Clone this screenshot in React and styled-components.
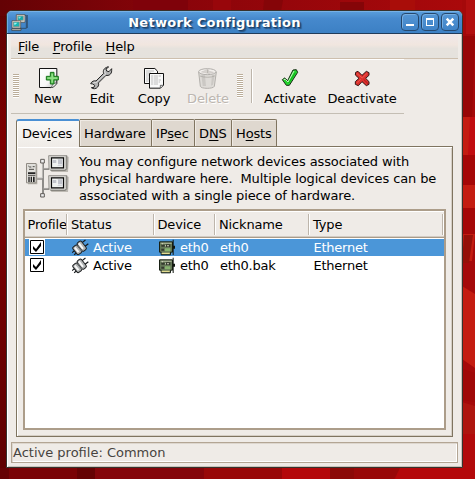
import React from "react";
import styled, { createGlobalStyle, css } from "styled-components";

const GlobalStyle = createGlobalStyle`
  html, body { margin: 0; padding: 0; overflow: hidden; }
  * { box-sizing: border-box; }
`;

const Desktop = styled.div`
  position: relative;
  width: 475px;
  height: 479px;
  padding: 10px 12px 11px 6px;
  overflow: hidden;
  font: 13px/17px "DejaVu Sans", sans-serif;
  letter-spacing: -0.15px;
  color: #000;
  background: linear-gradient(90deg, #5e0000, #880408 45%, #b40a0a);
`;
const WallpaperArt = styled.svg`
  position: absolute;
  inset: 0;
`;
const Window = styled.main`
  position: relative;
  display: flex;
  flex-direction: column;
  width: 457px;
  height: 458px;
  border: 1px solid #37332d;
  border-radius: 6px 6px 0 0;
  background: #efebe7;
  box-shadow: inset 1px 0 #fff, inset -1px -1px #c9c2ba;
  overflow: hidden;
`;
const TitleBar = styled.header`
  display: flex;
  align-items: center;
  flex: none;
  height: 23px;
  padding: 0 3px 0 4px;
  background: linear-gradient(#5b9fdc, #4689cd 35%, #3c80c4);
  border-bottom: 1px solid #203b5a;
  box-shadow: inset 0 1px #76b1e6, inset 1px 0 #6fabe1;
`;
const Title = styled.h1`
  flex: 1;
  margin: 0;
  text-align: center;
  font-size: 13px;
  font-weight: bold;
  letter-spacing: 0.27px;
  color: #fff;
  text-shadow: 1px 1px 1px #1b3f66, 2px 2px 1px #2a5788;
`;
const WindowButtons = styled.div`
  display: flex;
  gap: 2px;
`;
const WindowButton = styled.button`
  width: 18px;
  height: 18px;
  padding: 0;
  border: 1px solid #25486e;
  border-radius: 4px;
  background: linear-gradient(#5596d5, #3f83c7);
  box-shadow: inset 1px 1px #76aee1;
  display: grid;
  place-items: center;
`;
const MenuBar = styled.nav`
  display: flex;
  flex: none;
  gap: 13.5px;
  height: 25px;
  margin: 0 4px;
  padding: 4px 7px 0;
  border-bottom: 1px solid #cdbfae;
  background: linear-gradient(#efe8ea, #f1e6df 45%, #e6e2dd 60%, #e5e2dd);
`;
const MenuItem = styled.span`
  white-space: pre;
`;
const Mnemonic = styled.u`
  text-decoration-thickness: 1px;
  text-underline-offset: 2px;
`;
const Toolbar = styled.div`
  display: flex;
  flex: none;
  width: 393px;
  height: 55px;
  margin-left: 4px;
  padding-left: 2px;
  border-top: 1px solid #fff;
  border-bottom: 1px solid #c4beb4;
`;
const Grip = styled.div`
  width: 6px;
  height: 24px;
  margin: 14px ${(p) => p.$after}px 0 0;
  background: repeating-linear-gradient(#bbad9a 0 1px, #fff 1px 2px);
`;
const Separator = styled.div`
  width: 2px;
  height: 34px;
  margin: 9px 1px 0 0;
  background: #fff;
  border-left: 1px solid #bdb5ab;
`;
const ToolButton = styled.div`
  display: flex;
  flex-direction: column;
  align-items: center;
  width: ${(p) => p.$width}px;
  padding-top: 6px;
  white-space: nowrap;
  color: ${(p) => (p.$disabled ? "#bcb6b0" : "#000")};
  text-shadow: ${(p) => (p.$disabled ? "1px 1px #fff" : "none")};
`;
const TabStrip = styled.div`
  position: relative;
  z-index: 1;
  display: flex;
  flex: none;
  height: 28px;
  margin: 5px 0 -1px 9px;
`;
const Tab = styled.div`
  width: ${(p) => p.$width}px;
  height: 27px;
  padding: 5px 0 0 4px;
  white-space: nowrap;
  border: 1px solid #7f7460;
  border-left-width: 0;
  border-bottom: 0;
  border-radius: 0 2px 0 0;
  background: #dfd8cf;
  box-shadow: inset 1px 1px #efeae4;
  ${(p) =>
    p.$active &&
    css`
      height: 28px;
      padding: 4px 0 0 5px;
      border-left-width: 1px;
      border-top: 2px solid #4a90d4;
      border-radius: 3px 2px 0 0;
      background: linear-gradient(#f9f8f6, #efebe7);
      box-shadow: inset 1px 0 #fff;
    `}
`;
const Panel = styled.section`
  flex: none;
  display: flex;
  flex-direction: column;
  width: 437px;
  height: 291px;
  margin-left: 9px;
  padding: 6px;
  border: 1px solid #7f7460;
  box-shadow: inset 1px 1px #fff, inset -1px -1px #d5cec5;
`;
const Intro = styled.div`
  display: flex;
  height: 56px;
  padding-left: 2px;
`;
const IntroText = styled.p`
  margin: 0 0 0 9px;
  white-space: pre;
  letter-spacing: -0.12px;
`;
const Table = styled.div`
  width: 423px;
  height: 221px;
  border: 2px solid #ac9d8a;
  background: #fff;
`;
const columns = css`
  display: grid;
  grid-template-columns: 42px 87px 61px 94px 134px 1fr;
`;
const HeaderRow = styled.div`
  ${columns}
  height: 28px;
  padding: 3px 0 0;
  background: #efebe7;
  border-bottom: 1px solid #fff;
  box-shadow: inset 0 1px #fff, inset 0 -1px #a99b89, inset 0 -2px #d3ccc4;
`;
const HeaderCell = styled.div`
  height: 21px;
  padding: 2px 0 0 ${(p) => p.$pad}px;
  border-right: 1px solid #bdb5ab;
  box-shadow: 1px 0 #fff;
  overflow: hidden;
  white-space: nowrap;
`;
const DataRow = styled.div`
  ${columns}
  height: ${(p) => (p.$selected ? 17 : 19)}px;
  padding-top: ${(p) => (p.$selected ? 0 : 1)}px;
  color: ${(p) => (p.$selected ? "#fff" : "#000")};
  background: ${(p) => (p.$selected ? "#4b96d8" : "#fff")};
`;
const Cell = styled.div`
  display: flex;
  gap: 4px;
  height: 18px;
  padding-left: ${(p) => p.$pad}px;
  white-space: nowrap;
  letter-spacing: -0.25px;
`;
const StatusBar = styled.footer`
  height: 21px;
  margin: 5px 4px 0;
  padding: 1px 0 0 1px;
  border: 1px solid #b3a594;
  box-shadow: inset 1px 1px #ddd6ce, inset -1px -1px #fff;
  color: #474340;
  letter-spacing: 0;
`;

const Wallpaper = () => (
  <WallpaperArt width="475" height="479">
    <defs>
      <linearGradient id="leftFade" x2="0" y2="1">
        <stop offset="0" stopColor="#5c0202" />
        <stop offset="0.3" stopColor="#7e0000" />
        <stop offset="0.6" stopColor="#720000" />
        <stop offset="1" stopColor="#5e0000" />
      </linearGradient>
      <linearGradient id="topFade">
        <stop offset="0" stopColor="#640204" />
        <stop offset="0.35" stopColor="#88040a" />
        <stop offset="1" stopColor="#ab090b" />
      </linearGradient>
    </defs>
    <path fill="url(#leftFade)" d="M0 0h8v479H0z" />
    <path fill="url(#topFade)" d="M0 0h475v16H0z" />
    <path fill="#7f020a" d="M133 0h55v11h-55z" />
    <path fill="#98060b" d="M213 0h18v11h-18z" />
    <path fill="#850508" d="M264 0h19l-2 11h-18zM340 2h24v9h-24z" />
    <path fill="#a90d09" d="M390 0h25v11h-25z" />
    <path fill="#a5090a" d="M462 0h13v479h-13z" />
    <path fill="#b20f0f" d="M466 0h9v34h-9z" />
    <path fill="#980606" d="M463 36h12l-3 82h-9z" />
    <path fill="#c41c11" d="M462 117h10l-3 38h-7zM462 185h13v23h-13zM462 234h13l-3 27h-10zM462 286l13 8v74l-13-9z" />
    <path fill="#c10c10" d="M470 117h5v38h-7z" />
    <path fill="#a50707" d="M462 155h13v30h-13zM462 208h13v26h-13z" />
    <path fill="#951008" d="M464 235h9l-4 28h-7z" />
    <path fill="#a00808" d="M462 369l13 4v29l-13-2z" />
    <path fill="#ae150f" d="M462 402l13 4v28h-13z" />
    <path fill="#b20a0b" d="M462 434h13v45h-13z" />
    <path fill="#7a0305" d="M0 468h90v11H0z" />
    <path fill="#650203" d="M77 468h18v11H77zM0 468h9v11H0z" />
    <path fill="#84050a" d="M95 468h109v11H95z" />
    <path fill="#980808" d="M204 468h78v11h-78zM350 468h50l-6 11h-46z" />
    <path fill="#b4080a" d="M282 468h48v11h-48zM400 468h75v11h-80z" />
    <path fill="#8b0907" d="M330 468h24v11h-24z" />
  </WallpaperArt>
);

const WindowIcon = () => (
  <svg width="17" height="17" viewBox="34 40 51 51">
    <path d="M52 44h28v39H61M83 43v39" stroke="#273848" strokeWidth="2" fill="none" />
    <path d="M50 42h26v23H50z" fill="#d9d5cd" stroke="#4c4a45" strokeWidth="2" />
    <path d="M54 46h17v13H54z" fill="#14a9a8" stroke="#a09d94" strokeWidth="2" />
    <path d="M37 60h26v22H37z" fill="#e1ded7" stroke="#4c4a45" strokeWidth="2" />
    <path d="M41 64h18v14H41z" fill="#14b7b4" stroke="#8a8880" strokeWidth="2" />
    <path d="M43 66h10l-8 8z" fill="#a5f4ef" />
    <path d="M56 48h9l-7 7z" fill="#85e5e2" />
    <path d="M36 84h28v5H36z" fill="#c9c6bd" stroke="#36342f" strokeWidth="2" />
  </svg>
);
const MinimizeIcon = () => (
  <svg width="14" height="14"><path d="M3 9h8v2H3z" fill="#fff" /></svg>
);
const MaximizeIcon = () => (
  <svg width="14" height="14"><path d="M3 3h8v8H3zM4 5v5h6V5z" fill="#fff" fillRule="evenodd" /></svg>
);
const CloseIcon = () => (
  <svg width="14" height="14"><path d="M3.700 3.700l6.600 6.600M10.300 3.700l-6.600 6.600" stroke="#fff" strokeWidth="2.500" /></svg>
);

const NewIcon = () => (
  <svg width="24" height="24" viewBox="108 198 72 72">
    <defs>
      <linearGradient id="paper" x2="1" y2="1"><stop stopColor="#fff" /><stop offset=".6" stopColor="#f7f7f7" /><stop offset="1" stopColor="#b8b8b8" /></linearGradient>
    </defs>
    <path d="M118.500 205.500h52v45l-12 12h-40z" fill="url(#paper)" stroke="#141414" strokeWidth="3" />
    <path d="M170 246c-2 11-8 16-18 17 5-4 6-8 5-13 5 1 9 0 13-4z" fill="#e6e6e6" stroke="#444" strokeWidth="2" />
    <path d="M151 217h11v12h13v11h-13v12h-11v-12h-12v-11h12z" fill="#55bd50" stroke="#16731a" strokeWidth="3" strokeLinejoin="round" />
    <path d="M154 221h5v11h13v5h-13v11h-5v-11h-12v-5h12z" fill="#8fdf86" />
  </svg>
);
const EditIcon = () => (
  <svg width="24" height="24" viewBox="270 198 72 72">
    <path d="M320 202c-8 3-12 10-9 18l-23 23c-6-2-13 1-16 8l6 1 6 4-2 6-8 1c5 5 15 4 19-2 3-4 4-9 2-12l23-23c8 2 17-3 17-14v-6l-8 9-7-2-2-6 8-6c-2-1-4-1-6 1z" fill="#b2b2b2" stroke="#252525" strokeWidth="3" strokeLinejoin="round" />
    <path d="M315 210c-2 6 0 9 2 12l-27 26c-4-1-7-1-10 1" fill="none" stroke="#e3e3e3" strokeWidth="3" />
    <path d="M313 228l-22 22" stroke="#8c8c8c" strokeWidth="2" />
  </svg>
);
const CopyIcon = () => (
  <svg width="24" height="24" viewBox="426 198 72 72">
    <path d="M433.500 205.500h31l8 8v37h-39z" fill="#fafafa" stroke="#111" strokeWidth="3" />
    <path d="M438 213h24M438 219h15M438 225h10M438 231h8M438 237h9M438 243h8" stroke="#a0a0a0" strokeWidth="2" />
    <path d="M448.500 220.500h42v35l-9 9h-33z" fill="#fafafa" stroke="#111" strokeWidth="3" />
    <path d="M481 264v-8h9" fill="#ddd" stroke="#333" strokeWidth="2" />
    <path d="M453 228h30M453 234h23M453 240h31M453 246h27M453 252h22" stroke="#a0a0a0" strokeWidth="2" strokeDasharray="7 2 12 2" />
  </svg>
);
const DeleteIcon = () => (
  <svg width="24" height="24" viewBox="588 198 72 72">
    <path d="M596 216l5 43c2 8 39 8 42 0l6-43z" fill="#dedbd7" stroke="#b2afab" strokeWidth="3" />
    <path d="M604 224l4 34h10l-3-32zM636 225l-3 32 6-3 5-29z" fill="#cbc8c4" />
    <ellipse cx="622" cy="215" rx="26" ry="9" fill="#f2efec" stroke="#b2afab" strokeWidth="3" />
    <path d="M604 216l14-6 5-3 3 6 15 4-14 4z" fill="#d7d3cf" stroke="#bbb7b2" />
    <path d="M623 209v10M600 228c12 5 33 5 44 0" stroke="#a5a19c" strokeWidth="2" fill="none" />
  </svg>
);
const ActivateIcon = () => (
  <svg width="24" height="24" viewBox="834 198 72 72">
    <path d="M847 239l7-5 9 8 16-32 10-1 4 8-25 39h-9z" fill="#25d32e" stroke="#142b12" strokeWidth="3" strokeLinejoin="round" />
    <path d="M851 239l5-1 8 8 18-33" stroke="#c3f5bd" strokeWidth="3" fill="none" />
    <path d="M866 249l20-31" stroke="#0cb31a" strokeWidth="3" />
  </svg>
);
const DeactivateIcon = () => (
  <svg width="24" height="24" viewBox="1050 198 72 72">
    <path d="M1067 217l7-3 12 12 13-12 8 4v8l-10 9 10 10v8l-8 4-13-12-11 12-9-4v-8l11-10-11-10z" fill="#dc302d" stroke="#331818" strokeWidth="3" strokeLinejoin="round" />
    <path d="M1070 220l17 14 14-14M1070 249l12-11" stroke="#ee5a52" strokeWidth="3" fill="none" />
    <path d="M1091 238l13 13" stroke="#b5161a" strokeWidth="3" />
  </svg>
);

const Monitor = ({ y }) => (
  <g transform={`translate(0 ${y})`}>
    <path d="M149 34h57v14l-2 32h-50z" fill="#bdb9b2" />
    <path d="M146 31h55v40l-3 4h-46l-5-6z" fill="#d8d7d3" stroke="#96948f" strokeWidth="3" />
    <path d="M199 32v38l-4 5h-43" stroke="#85827c" strokeWidth="3" fill="none" />
    <path d="M154.500 37.500h36v30h-36z" fill="#eef0ef" stroke="#090909" strokeWidth="3.500" />
    <path d="M158 44h11v9h-11zM173 42h14v19h-14z" fill="#c1c3cb" />
    <path d="M170 44h2v14h14" stroke="#fff" strokeWidth="2" fill="none" />
  </g>
);
const NetworkDiagramIcon = () => (
  <svg width="45" height="48" viewBox="75 132 135 144">
    <path d="M110 209h16M129 156v107M129 180h18M129 240h18" fill="none" stroke="#8d8b88" strokeWidth="6" />
    <path d="M110 207h17v-48M131 177h14M131 237h14" fill="none" stroke="#deddd9" strokeWidth="2" />
    <path d="M122 151h11v11h-11zM122 254h11v10h-11z" fill="#eee" stroke="#615d59" strokeWidth="3" />
    <path d="M84 166h28v60H84z" fill="#b4b0a9" />
    <path d="M79.500 163.500h29v58h-29z" fill="#e0dfdb" stroke="#908b84" strokeWidth="3" />
    <path d="M85 171l4 3h5M98 173h6M87 181h15M84 199h22" stroke="#4d4b48" strokeWidth="3" fill="none" />
    <path d="M84 190h22v5H84zM85 203h4v16h-4zM92 203h4v16h-4zM99 203h5v16h-5z" fill="#222" />
    <Monitor y={109} />
    <Monitor y={169} />
  </svg>
);
const PlugIcon = () => (
  <svg width="17" height="18" viewBox="214 386 51 54">
    <g transform="translate(238 412) rotate(-38)">
      <path d="M-28-3h10v9h-9M12-8h15M12 6h15" stroke="#15181a" strokeWidth="3.500" fill="none" />
      <rect x="-19" y="-14" width="17" height="28" rx="5" fill="#b0b3b3" stroke="#1b1d1f" strokeWidth="3" />
      <rect x="-1" y="-16" width="16" height="31" rx="5" fill="#b0b3b3" stroke="#1b1d1f" strokeWidth="3" />
      <path d="M-12-10v18M5-12v20" stroke="#f8f8f8" strokeWidth="6" />
      <path d="M-2-10v22" stroke="#777b7d" strokeWidth="3" />
    </g>
  </svg>
);
const CardIcon = () => (
  <svg width="17" height="17" viewBox="477 718 51 51">
    <path d="M478.500 726.500h39v31h-6v8h-28v-8h-5z" fill="#647757" stroke="#182014" strokeWidth="3" />
    <path d="M518 720h3v46h-3zM521 738h4v9h-4z" fill="#101510" />
    <path d="M482 729h33v3h-33z" fill="#b6bea0" />
    <path d="M484 735h10v6h-10zM498 734h13v8h-13zM484 747h8v6h-8z" fill="#343a2e" />
    <path d="M486 731h3v3h-3zM495 737h3v3h-3zM501 737h6v3h-6z" fill="#d7d8c2" />
    <path d="M495 746h16v9h-16z" fill="#87b36e" />
    <path d="M485 759h24v4h-24z" fill="#e3dc90" />
  </svg>
);
const CheckBox = () => (
  <svg width="16" height="16">
    <path d="M0 0h16v16H0z" fill="#fff" />
    <path d="M1.500 1.500h13v13h-13z" fill="#fff" stroke="#000" />
    <path d="M4 7l3 3 5-7v4l-5 6-3-3z" fill="#000" />
  </svg>
);

const tools = [
  { label: "New", width: 54, Icon: NewIcon },
  { label: "Edit", width: 54, Icon: EditIcon },
  { label: "Copy", width: 50, Icon: CopyIcon },
  { label: "Delete", width: 58, Icon: DeleteIcon, disabled: true },
];
const actions = [
  { label: "Activate", width: 72, Icon: ActivateIcon },
  { label: "Deactivate", width: 72, Icon: DeactivateIcon },
];
const tabs = [
  { text: ["Dev", "i", "ces"], width: 64, active: true },
  { text: ["Hard", "w", "are"], width: 72 },
  { text: ["IP", "s", "ec"], width: 43 },
  { text: ["D", "N", "S"], width: 37 },
  { text: ["H", "o", "sts"], width: 45 },
];
const headers = [
  ["Profile", 2.5],
  ["Status", 4],
  ["Device", 3.5],
  ["Nickname", 4],
  ["Type", 4],
];
const devices = [
  { nickname: "eth0", selected: true },
  { nickname: "eth0.bak", selected: false },
];

const Labelled = ({ text: [before, key, after] }) => (
  <>
    {before}
    <Mnemonic>{key}</Mnemonic>
    {after}
  </>
);
const ToolGroup = ({ items }) =>
  items.map(({ label, width, Icon, disabled }) => (
    <ToolButton key={label} $width={width} $disabled={disabled}>
      <Icon />
      {label}
    </ToolButton>
  ));

export default function App() {
  return (
    <Desktop>
      <GlobalStyle />
      <Wallpaper />
      <Window>
        <TitleBar>
          <WindowIcon />
          <Title>Network Configuration</Title>
          <WindowButtons>
            <WindowButton aria-label="Minimize"><MinimizeIcon /></WindowButton>
            <WindowButton aria-label="Maximize"><MaximizeIcon /></WindowButton>
            <WindowButton aria-label="Close"><CloseIcon /></WindowButton>
          </WindowButtons>
        </TitleBar>
        <MenuBar>
          <MenuItem><Labelled text={["", "F", "ile"]} /></MenuItem>
          <MenuItem><Labelled text={["", "P", "rofile"]} /></MenuItem>
          <MenuItem><Labelled text={["", "H", "elp"]} /></MenuItem>
        </MenuBar>
        <Toolbar>
          <Grip $after={2} />
          <ToolGroup items={tools} />
          <Grip $after={8} />
          <Separator />
          <ToolGroup items={actions} />
        </Toolbar>
        <TabStrip>
          {tabs.map(({ text, width, active }) => (
            <Tab key={text.join("")} $width={width} $active={active}>
              <Labelled text={text} />
            </Tab>
          ))}
        </TabStrip>
        <Panel>
          <Intro>
            <NetworkDiagramIcon />
            <IntroText>
              {"You may configure network devices associated with\nphysical hardware here.  Multiple logical devices can be\nassociated with a single piece of hardware."}
            </IntroText>
          </Intro>
          <Table>
            <HeaderRow>
              {headers.map(([name, pad]) => (
                <HeaderCell key={name} $pad={pad}>{name}</HeaderCell>
              ))}
            </HeaderRow>
            {devices.map(({ nickname, selected }) => (
              <DataRow key={nickname} $selected={selected}>
                <Cell $pad={4}><CheckBox /></Cell>
                <Cell $pad={5}><PlugIcon />Active</Cell>
                <Cell $pad={5}><CardIcon />eth0</Cell>
                <Cell $pad={5}>{nickname}</Cell>
                <Cell $pad={4.5}>Ethernet</Cell>
              </DataRow>
            ))}
          </Table>
        </Panel>
        <StatusBar>Active profile: Common</StatusBar>
      </Window>
    </Desktop>
  );
}
